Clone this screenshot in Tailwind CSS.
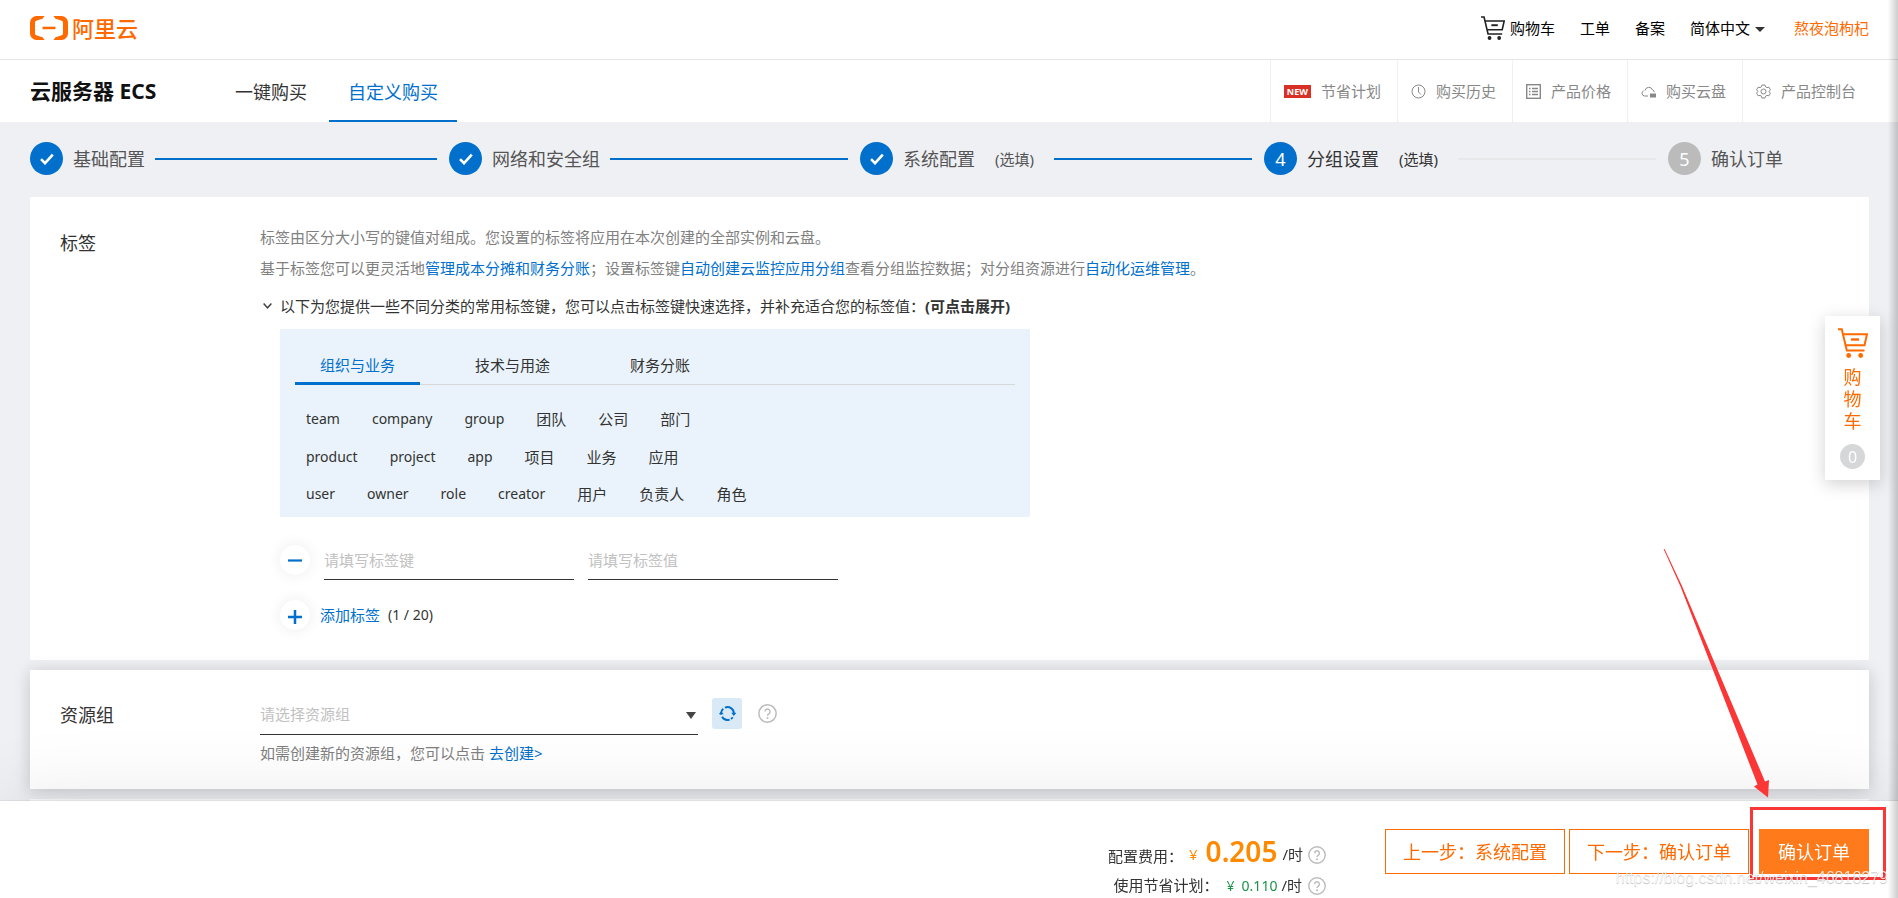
<!DOCTYPE html>
<html lang="zh-CN">
<head>
<meta charset="utf-8">
<meta name="viewport" content="width=device-width, initial-scale=1">
<title>云服务器 ECS - 自定义购买</title>
<script src="https://cdn.jsdelivr.net/npm/@tailwindcss/browser@4"></script>
</head>
<body class="min-h-screen bg-[#eff0f4] font-['Noto_Sans','Noto_Sans_CJK_SC',sans-serif] text-[15px] leading-5 text-[#333]">

<svg class="hidden" aria-hidden="true">
  <symbol id="check" viewBox="0 0 14 12"><path d="M1 6.2 5 10.2 12.8 1.6" fill="none" stroke="#fff" stroke-width="2.6"/></symbol>
  <symbol id="cart" viewBox="0 0 30 30"><g fill="none" stroke="currentColor" stroke-width="2"><path d="M0 1.2h3.800L8.800 22.500H26.500"/><path d="M5 6.200h24L26.500 17.200H7.800"/><path d="M13 11.500h8" stroke-width="2.400"/></g><circle cx="10.700" cy="27.500" r="2.400" fill="currentColor"/><circle cx="22.700" cy="27.500" r="2.400" fill="currentColor"/></symbol>
  <symbol id="help" viewBox="0 0 18 18"><circle cx="9" cy="9" r="8.200" fill="none" stroke="#bbb" stroke-width="1.400"/><path d="M6.600 7.200a2.400 2.400 0 1 1 3.600 2.100c-.9.500-1.200.9-1.200 1.800" fill="none" stroke="#bbb" stroke-width="1.400"/><circle cx="9" cy="13.200" r="1" fill="#bbb"/></symbol>
</svg>

<header class="flex h-15 items-center justify-between border-b border-[#e6e6e8] bg-white pr-[29px] pl-[30px]">
  <a href="#" class="flex items-center gap-1 pb-1 text-[22px] leading-6 font-medium text-[#ff6a00]">
    <svg class="h-6 w-[38px]" viewBox="0 0 38 24" fill="#ff6a00"><path d="M14.5 0H6.5A6.5 6.5 0 0 0 0 6.500v11A6.500 6.500 0 0 0 6.500 24h8L12.500 21.200 6.800 19.500A2.300 2.300 0 0 1 5 17.200V6.800A2.300 2.300 0 0 1 6.800 4.500L12.500 2.800Z"/><path d="M23.500 0h8A6.500 6.500 0 0 1 38 6.500v11A6.500 6.500 0 0 1 31.500 24h-8l2-2.800 5.700-1.700A2.300 2.300 0 0 0 33 17.200V6.800a2.300 2.300 0 0 0-1.800-2.300L25.500 2.800Z"/><path d="M12.500 10.700h13v2.500h-13z"/></svg>
    <span>阿里云</span>
  </a>
  <nav class="flex items-center gap-[25px] pb-1 text-black">
    <a href="#" class="flex items-center gap-[5px]"><svg class="size-6 text-[#222]"><use href="#cart"/></svg>购物车</a>
    <a href="#">工单</a>
    <a href="#">备案</a>
    <button type="button" class="flex items-center gap-[5px]">简体中文<svg class="mt-1 h-[5px] w-[10px]" viewBox="0 0 10 5"><path d="M0 0h10L5 5z" fill="#333"/></svg></button>
    <a href="#" class="pl-1 text-[#ff6a00]">熬夜泡枸杞</a>
  </nav>
</header>

<div class="flex h-[62px] justify-between bg-white pr-[29px] pl-[30px]">
  <div class="flex items-stretch">
    <h1 class="flex w-[186px] items-center text-[21px] font-bold text-[#111]">云服务器 ECS</h1>
    <nav class="flex gap-[3px] text-lg leading-6">
      <a href="#" class="flex items-center border-b-2 border-transparent px-[19px] pt-[3px]">一键购买</a>
      <a href="#" class="flex items-center border-b-2 border-[#0070cc] px-[19px] pt-[3px] text-[#0070cc]">自定义购买</a>
    </nav>
  </div>
  <nav class="flex items-stretch text-[#888]">
    <a href="#" class="flex items-center gap-[10px] border-l border-[#f0f0f2] pr-4 pl-[13px]"><span class="bg-[#d93026] px-[3px] text-[9px] leading-[13px] font-bold text-white">NEW</span>节省计划</a>
    <a href="#" class="flex items-center gap-[10px] border-l border-[#f0f0f2] pr-4 pl-[13px]"><svg class="size-[15px]" viewBox="0 0 15 15" fill="none" stroke="#888"><circle cx="7.500" cy="7.500" r="6.500"/><path d="M7.500 3v5l2.500 2.500"/></svg>购买历史</a>
    <a href="#" class="flex items-center gap-[10px] border-l border-[#f0f0f2] pr-4 pl-[13px]"><svg class="size-[15px]" viewBox="0 0 15 15" fill="none" stroke="#888"><rect x=".7" y=".7" width="13.600" height="13.600" stroke-width="1.400"/><path d="M3 4.500h1.500M6 4.500h6M3 7.500h1.500M6 7.500h6M3 10.500h1.500M6 10.500h6" stroke-width="1.300"/></svg>产品价格</a>
    <a href="#" class="flex items-center gap-[10px] border-l border-[#f0f0f2] pr-4 pl-[13px]"><svg class="size-[15px]" viewBox="0 0 15 15" fill="none" stroke="#888"><path d="M7 12H3.500a2.700 2.700 0 0 1-.8-5.200M4 6.500a3.900 3.900 0 0 1 7.500-.6c1 .3 1.700 1.100 1.800 2.300"/><path d="M9 9.500h6v4H9z" fill="#888" stroke="none"/></svg>购买云盘</a>
    <a href="#" class="flex items-center gap-[10px] border-l border-[#f0f0f2] px-[13px]"><svg class="size-[15px]" viewBox="0 0 15 15" fill="none" stroke="#888"><path d="M6 1h3l.6 1.800 1.400.8 1.900-.4 1.500 2.600L13.100 7.500l1.300 1.700-1.500 2.600-1.900-.4-1.400.8L9 14H6l-.6-1.800-1.400-.8-1.900.4L.6 9.200 1.900 7.500.6 5.800l1.500-2.600 1.900.4 1.400-.8z" stroke-linejoin="round"/><circle cx="7.500" cy="7.500" r="2.500"/></svg>产品控制台</a>
  </nav>
</div>

<main class="pr-[29px] pb-[97px] pl-[30px]">
  <ol class="grid h-[75px] grid-cols-[419fr_411fr_404fr_404fr_201fr] items-center pb-[2px] text-lg leading-6 text-[#555]">
    <li class="flex items-center gap-[10px] pr-3"><span class="flex size-[33px] shrink-0 items-center justify-center rounded-full bg-[#0070cc]"><svg class="h-3 w-[14px]"><use href="#check"/></svg></span>基础配置<span class="h-[2px] grow bg-[#0070cc]"></span></li>
    <li class="flex items-center gap-[10px] pr-3"><span class="flex size-[33px] shrink-0 items-center justify-center rounded-full bg-[#0070cc]"><svg class="h-3 w-[14px]"><use href="#check"/></svg></span>网络和安全组<span class="h-[2px] grow bg-[#0070cc]"></span></li>
    <li class="flex items-center gap-[10px] pr-3"><span class="flex size-[33px] shrink-0 items-center justify-center rounded-full bg-[#0070cc]"><svg class="h-3 w-[14px]"><use href="#check"/></svg></span>系统配置<span class="px-[10px] text-[15px]">(选填)</span><span class="h-[2px] grow bg-[#0070cc]"></span></li>
    <li class="flex items-center gap-[10px] pr-3 text-[#333]" aria-current="step"><span class="flex size-[33px] shrink-0 items-center justify-center rounded-full bg-[#0070cc] text-white">4</span>分组设置<span class="px-[10px] text-[15px]">(选填)</span><span class="h-[2px] grow bg-[#e6e8ea]"></span></li>
    <li class="flex items-center gap-[10px]"><span class="flex size-[33px] shrink-0 items-center justify-center rounded-full bg-[#bbb] text-white">5</span>确认订单</li>
  </ol>

  <section class="flex bg-white p-[30px]">
    <h2 class="w-[200px] shrink-0 pt-1 text-lg leading-6">标签</h2>
    <div class="min-w-0 grow">
      <p class="-mt-[5px] leading-[31px] text-[#808080]">标签由区分大小写的键值对组成。您设置的标签将应用在本次创建的全部实例和云盘。<br>基于标签您可以更灵活地<a href="#" class="text-[#0070cc]">管理成本分摊和财务分账</a>；设置标签键<a href="#" class="text-[#0070cc]">自动创建云监控应用分组</a>查看分组监控数据；对分组资源进行<a href="#" class="text-[#0070cc]">自动化运维管理</a>。</p>
      <button type="button" class="mt-3 flex items-center gap-2 pl-[3px] text-left"><svg class="h-[6px] w-[9px]" viewBox="0 0 9 6"><path d="M.6.6 4.500 4.800 8.400.6" fill="none" stroke="#444" stroke-width="1.500"/></svg><span>以下为您提供一些不同分类的常用标签键，您可以点击标签键快速选择，并补充适合您的标签值：<b>(可点击展开)</b></span></button>
      <div class="mt-[13px] ml-5 max-w-[750px] bg-[#eaf3fb] px-[15px] pt-[18px] pb-1">
        <div class="flex gap-[30px] border-b border-[#d7d8d9]" role="tablist">
          <button type="button" role="tab" aria-selected="true" class="-mb-px border-b-3 border-[#0070cc] px-[25px] pt-2 pb-[7px] text-[#0070cc]">组织与业务</button>
          <button type="button" role="tab" aria-selected="false" class="-mb-px border-b-3 border-transparent px-[25px] pt-2 pb-[7px]">技术与用途</button>
          <button type="button" role="tab" aria-selected="false" class="-mb-px border-b-3 border-transparent px-[25px] pt-2 pb-[7px]">财务分账</button>
        </div>
        <div class="mt-[15px] pl-[11px]">
          <div class="flex h-[38px] items-center gap-8"><button type="button" class="text-sm">team</button><button type="button" class="text-sm">company</button><button type="button" class="text-sm">group</button><button type="button">团队</button><button type="button">公司</button><button type="button">部门</button></div>
          <div class="flex h-[37px] items-center gap-8"><button type="button" class="text-sm">product</button><button type="button" class="text-sm">project</button><button type="button" class="text-sm">app</button><button type="button">项目</button><button type="button">业务</button><button type="button">应用</button></div>
          <div class="flex h-[38px] items-center gap-8"><button type="button" class="text-sm">user</button><button type="button" class="text-sm">owner</button><button type="button" class="text-sm">role</button><button type="button" class="text-sm">creator</button><button type="button">用户</button><button type="button">负责人</button><button type="button">角色</button></div>
        </div>
      </div>
      <div class="mt-[23px] ml-5 flex h-10 items-center">
        <button type="button" aria-label="删除标签" class="flex size-[30px] items-center justify-center rounded-full bg-white shadow-[0_0_15px_rgba(0,0,0,0.08)]"><svg class="h-[14px] w-[14px]" viewBox="0 0 14 14"><path d="M0 7.500h14" stroke="#0070cc" stroke-width="2.200"/></svg></button>
        <input aria-label="标签键" placeholder="请填写标签键" class="ml-[14px] h-10 w-[250px] border-b border-[#333] bg-transparent outline-none placeholder:text-[#c1c1c1]">
        <input aria-label="标签值" placeholder="请填写标签值" class="ml-[14px] h-10 w-[250px] border-b border-[#333] bg-transparent outline-none placeholder:text-[#c1c1c1]">
      </div>
      <div class="mt-5 ml-5 flex items-center">
        <button type="button" class="flex items-center gap-[10px] text-[#0070cc]"><span class="flex size-[30px] items-center justify-center rounded-full bg-white shadow-[0_0_15px_rgba(0,0,0,0.08)]"><svg class="mt-1 h-[14px] w-[14px]" viewBox="0 0 14 14"><path d="M0 7h14M7 0v14" stroke="#0070cc" stroke-width="2.500"/></svg></span>添加标签</button>
        <span class="pl-2 text-sm">(1 / 20)</span>
      </div>
    </div>
  </section>

  <section class="relative mt-[10px] flex bg-white p-[30px] pt-6 pb-[26px] shadow-[0_2px_16px_rgba(0,0,0,0.18)]">
    <h2 class="w-[200px] shrink-0 pt-[9px] text-lg leading-6">资源组</h2>
    <div class="min-w-0 grow">
      <div class="flex items-start">
        <div class="relative w-[438px]">
          <select aria-label="资源组" class="h-[41px] w-full appearance-none border-b border-[#333] bg-transparent text-[#c1c1c1] outline-none"><option>请选择资源组</option></select>
          <svg class="pointer-events-none absolute top-[18px] right-[2px] h-[7px] w-[10px]" viewBox="0 0 10 7"><path d="M0 0h10L5 7z" fill="#444"/></svg>
        </div>
        <button type="button" aria-label="刷新" class="mt-1 ml-[14px] flex h-[31px] w-[30px] items-center justify-center rounded-[3px] bg-[#d9eaf6]"><svg class="size-[17px]" viewBox="0 0 16 16" fill="none" stroke="#0070cc" stroke-width="1.800"><path d="M2 9A6 6 0 0 1 4 3.500M5.600 2.400A6 6 0 0 1 14 8v1M12.900 11.500a6 6 0 0 1-1.600 1.600M10 13.700A6 6 0 0 1 2.900 11"/><path d="M-.2 8.800h4.600L2.100 5.800zM11.600 7.400h4.600l-2.300 3z" fill="#0070cc" stroke="none"/></svg></button>
        <button type="button" aria-label="帮助" class="mt-[10px] ml-4"><svg class="size-[19px]"><use href="#help"/></svg></button>
      </div>
      <p class="mt-2 text-[#808080]">如需创建新的资源组，您可以点击 <a href="#" class="text-[#0070cc]">去创建&gt;</a></p>
    </div>
  </section>

  <section class="mt-[10px] h-6 bg-white"></section>
</main>

<aside class="fixed top-[316px] right-[18px] flex h-[164px] w-[55px] flex-col items-center bg-white pt-3 text-lg leading-[22px] text-[#ff6a00] shadow-[0_4px_16px_rgba(0,0,0,0.18)]">
  <svg class="size-[30px]"><use href="#cart"/></svg>
  <a href="#" class="mt-2 flex flex-col items-center"><span>购</span><span>物</span><span>车</span></a>
  <span class="mt-3 flex size-[25px] items-center justify-center rounded-full bg-[#d5d7d8] text-base text-white">0</span>
</aside>

<footer class="fixed inset-x-0 bottom-0 flex h-[97px] items-start justify-end bg-white pr-[29px] shadow-[0_-1px_1px_rgba(0,0,0,0.06),0_0_80px_rgba(0,0,0,0.1)]">
  <div class="mr-[59px] flex flex-col items-end pt-[38px] leading-[31px]">
    <div class="flex h-[31px] items-center"><span class="pt-1">配置费用：</span><span class="pl-[6px] text-[#ff8a00]">¥</span><strong class="pr-[5px] pb-[6px] pl-2 text-[28px] font-semibold text-[#ff8a00]">0.205</strong><span>/时</span><svg class="ml-[5px] size-[18px]"><use href="#help"/></svg></div>
    <div class="flex h-[31px] items-center"><span>使用节省计划：</span><span class="pl-2 text-sm text-[#1a9348]">¥</span><span class="pr-1 pl-[7px] text-sm text-[#1a9348]">0.110</span><span>/时</span><svg class="ml-[6px] size-[18px]"><use href="#help"/></svg></div>
  </div>
  <div class="flex pt-7 text-lg leading-6">
    <button type="button" class="h-[45px] w-[180px] border border-[#ff6a00] text-[#ff6a00]">上一步：系统配置</button>
    <button type="button" class="ml-1 h-[45px] w-[180px] border border-[#ff6a00] text-[#ff6a00]">下一步：确认订单</button>
    <button type="button" class="ml-[10px] h-[45px] w-[110px] bg-[#ff7a1a] text-white">确认订单</button>
  </div>
</footer>

<!-- annotation: arrow and frame around the confirm button -->
<div class="pointer-events-none fixed right-3 bottom-[18px] h-[73px] w-[136px] border-3 border-[#fb3636]"></div>
<svg class="pointer-events-none fixed right-[128px] bottom-[100px] h-[250px] w-[108px]" viewBox="0 0 108 250"><path d="M1.600 1H2.600L20 38 103 233.500 107 232 106 249.500 92 238.500 95.500 236.500 18.500 38.500Z" fill="#fb3636"/></svg>
<p class="pointer-events-none fixed right-[10px] bottom-2 font-['Liberation_Sans',sans-serif] text-base text-white/80 [text-shadow:0_1px_1px_rgba(0,0,0,0.25)]">https://blog.csdn.net/weixin_46818279</p>
<div class="pointer-events-none fixed inset-y-0 right-0 w-[10px] bg-linear-to-r from-transparent to-black/20"></div>
</body>
</html>
